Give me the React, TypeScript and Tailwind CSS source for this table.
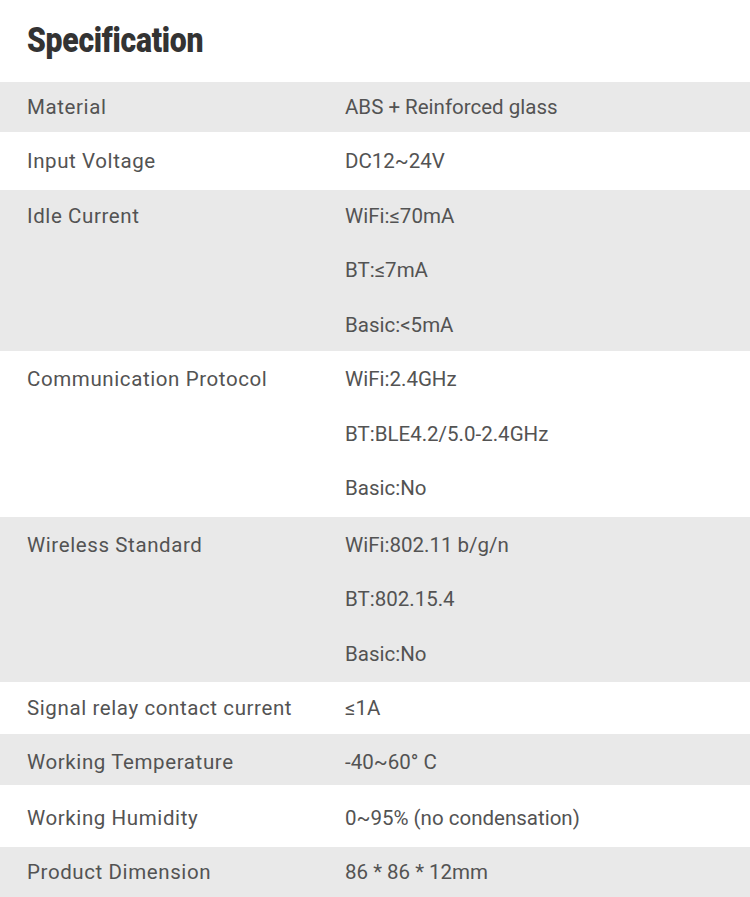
const rows: { label: string; values: string[]; h: string; gray: boolean }[] = [
  { label: "Material", values: ["ABS + Reinforced glass"], h: "h-[50px]", gray: true },
  { label: "Input Voltage", values: ["DC12~24V"], h: "h-[58px]", gray: false },
  { label: "Idle Current", values: ["WiFi:≤70mA", "BT:≤7mA", "Basic:<5mA"], h: "h-[161px]", gray: true },
  {
    label: "Communication Protocol",
    values: ["WiFi:2.4GHz", "BT:BLE4.2/5.0-2.4GHz", "Basic:No"],
    h: "h-[166px]",
    gray: false,
  },
  { label: "Wireless Standard", values: ["WiFi:802.11 b/g/n", "BT:802.15.4", "Basic:No"], h: "h-[165px]", gray: true },
  { label: "Signal relay contact current", values: ["≤1A"], h: "h-[52px]", gray: false },
  { label: "Working Temperature", values: ["-40~60° C"], h: "h-[51px] pt-[5px]", gray: true },
  { label: "Working Humidity", values: ["0~95% (no condensation)"], h: "h-[62px] pt-[5px]", gray: false },
  { label: "Product Dimension", values: ["86 * 86 * 12mm"], h: "h-[50px]", gray: true },
];

export default function App() {
  return (
    <div className="w-[750px] bg-white font-['Roboto',sans-serif] text-[#535353]">
      <div className="flex h-[82px] items-center px-[27px]">
        <h2 className="inline-block origin-left scale-x-[0.86] font-['Roboto',sans-serif] text-[35px] font-black tracking-[-0.3px] text-[#333]">
          Specification
        </h2>
      </div>
      {rows.map((r) => (
        <div key={r.label} className={`flex items-center ${r.h} ${r.gray ? "bg-[#e9e9e9]" : "bg-white"}`}>
          <div className="flex w-[345px] self-stretch items-center pl-[27px]">
            <div className="flex flex-col">
              <span className="text-[20.5px] leading-[54.6px] tracking-[0.6px]">{r.label}</span>
              {r.values.slice(1).map((v) => (
                <span key={v} className="h-[54.6px]" />
              ))}
            </div>
          </div>
          <div className="flex flex-col">
            {r.values.map((v) => (
              <span key={v} className="text-[20.5px] leading-[54.6px]">
                {v}
              </span>
            ))}
          </div>
        </div>
      ))}
    </div>
  );
}
